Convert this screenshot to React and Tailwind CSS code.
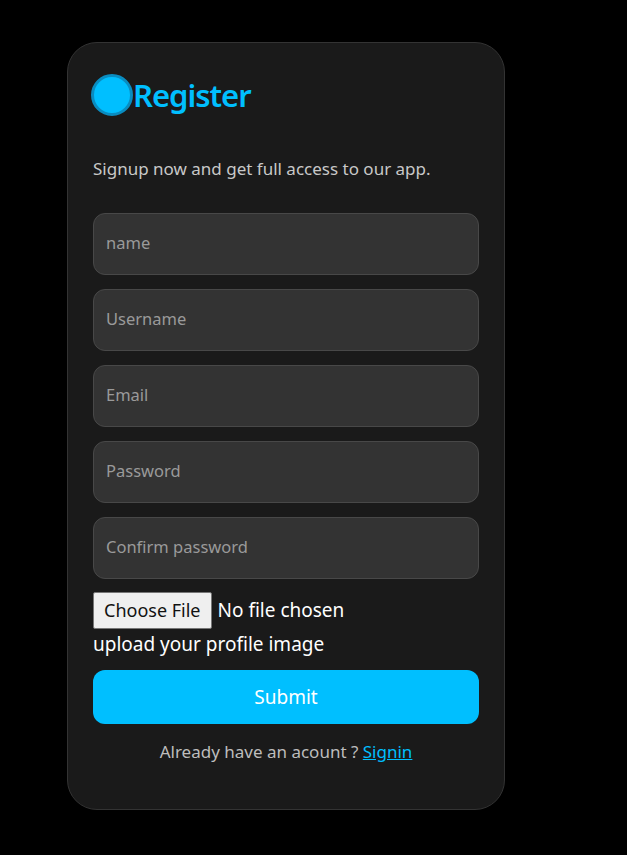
import React from 'react';

export default function App() {
  const fields = [
    { type: 'text', placeholder: 'name' },
    { type: 'text', placeholder: 'Username' },
    { type: 'email', placeholder: 'Email' },
    { type: 'password', placeholder: 'Password' },
    { type: 'password', placeholder: 'Confirm password' },
  ];

  return (
    <div className="min-h-[855px] w-full bg-black font-['Noto_Sans',sans-serif]">
      <div className="pl-[67px] pt-[42px]">
        <form
          onSubmit={(e) => e.preventDefault()}
          className="flex w-[438px] h-[768px] flex-col rounded-[30px] border border-[#333] bg-[#1a1a1a] px-[25px] pt-[31px]"
        >
          {/* Title */}
          <div className="-ml-[2px] flex items-center">
            <span className="block h-[42px] w-[42px] rounded-full border-[3px] border-[#0a8cc0] bg-[#00bfff]" />
            <h1 className="text-[31px] font-semibold leading-none tracking-[-1px] text-[#00bfff]">Register</h1>
          </div>

          <p className="mt-[44px] text-[17px] leading-none text-[#c8c8c8]">
            Signup now and get full access to our app.
          </p>

          {/* Inputs */}
          <div className="mt-[36px] flex flex-col gap-[14px]">
            {fields.map((f) => (
              <input
                key={f.placeholder}
                type={f.type}
                placeholder={f.placeholder}
                className="h-[62px] w-full rounded-[12px] border border-[#484848] bg-[#333] px-[12px] pb-[4px] text-[16.5px] text-white outline-none placeholder:text-[#9a9a9a] font-['Noto_Sans',sans-serif]"
              />
            ))}
          </div>

          <input
            type="file"
            className="mt-[13px] text-[19px] text-white font-['Noto_Sans',sans-serif] file:mr-[6px] file:rounded-[2px] file:border file:border-[#767676] file:bg-[#efefef] file:px-[10px] file:py-[4px] file:text-[18px] file:text-[#111]"
          />
          <label className="mt-[6px] text-[19px] leading-none text-white">upload your profile image</label>

          <button
            type="submit"
            className="mt-[16px] h-[54px] w-full rounded-[12px] bg-[#00bfff] text-[19px] text-white"
          >
            Submit
          </button>

          <p className="mt-[15px] text-center text-[17px] text-[#bdbdbd]">
            Already have an acount ?{' '}
            <a href="#" className="text-[#00bfff] underline">Signin</a>
          </p>
        </form>
      </div>
    </div>
  );
}
